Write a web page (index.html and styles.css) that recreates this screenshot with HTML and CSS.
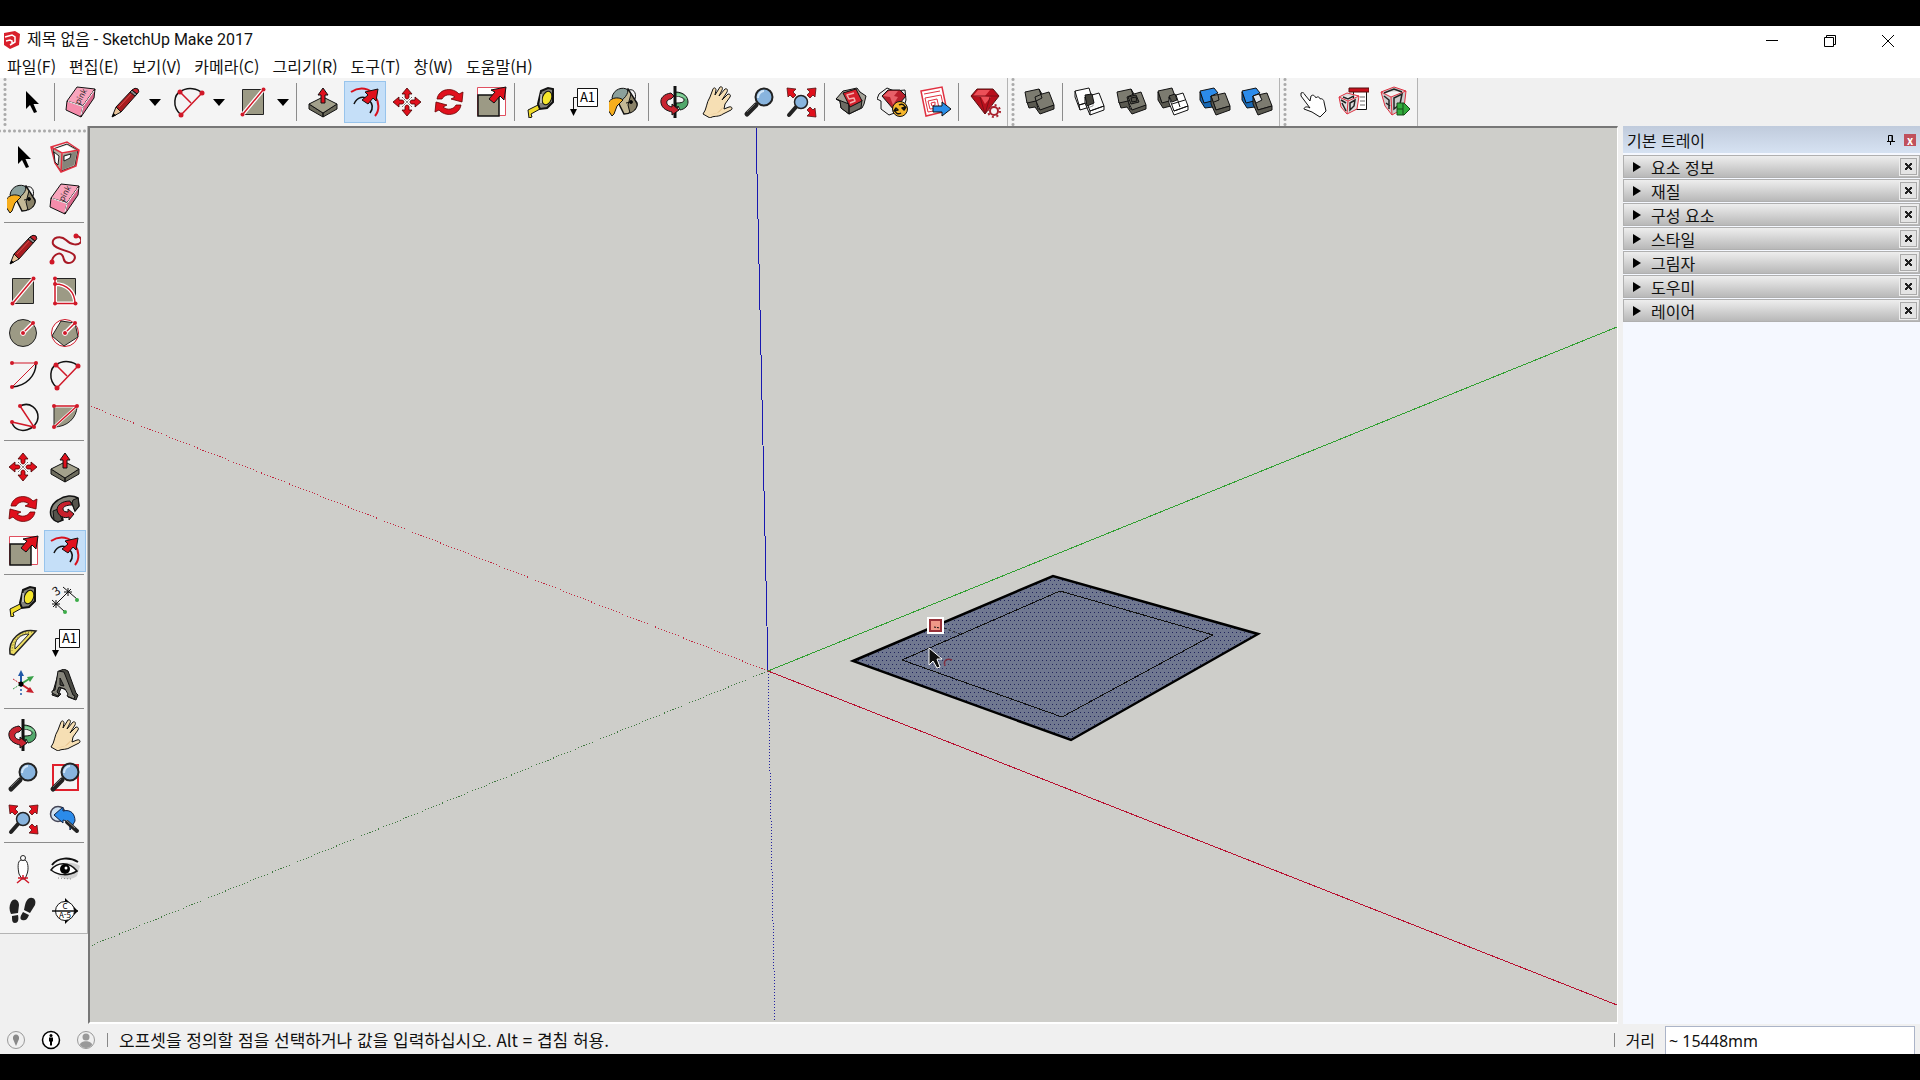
FILE: index.html
```
<!DOCTYPE html>
<html lang="ko">

<head>
    <meta charset="utf-8">
    <title>제목 없음 - SketchUp Make 2017</title>
    <meta name="viewport" content="width=device-width, initial-scale=1.0">
    <link rel="stylesheet" href="styles.css">
</head>

<body>
    <!-- icon sprite -->
    <svg class="sprite">
        <defs>
            <symbol id="i-select" viewBox="0 0 32 32">
                <path d="M11 5v18l4-4 4 8 3-1-3.5-8H24z" />
            </symbol>
            <symbol id="i-eraser" viewBox="0 0 32 32" stroke="#111" stroke-linejoin="round">
                <path fill="#f58cab" d="M2 15l16 5-2 11-15-7z" />
                <path fill="#f9a5bd" d="M12 1l18 2-12 17-16-5z" />
                <path fill="#d9688b" d="M30 3l-1 9-13 19 2-11z" />
                <path fill="none" stroke="#fff" d="M3 15.5l15 5L29 5M18 21l-2 8" />
                <text x="9" y="14" font-size="8" fill="#222" stroke="none" transform="rotate(-62 16 12)" font-family="Liberation Serif">pink</text>
            </symbol>
            <symbol id="i-pencil" viewBox="0 0 32 32">
                <path fill="#a81c20" stroke="#111" d="M7 21L23 4l5 4-16 18z" />
                <path stroke="#d8504a" d="M10 21L24 6" />
                <path fill="#e8c49a" stroke="#111" d="M7 21l5 5-9 5z" />
                <path d="M3 31l1.5-4 2.5 2.5z" />
                <path fill="#888" stroke="#111" d="M21 6l5 4 2-2-5-4z" />
                <path fill="#c8202c" stroke="#111" d="M23 4q3-3 6-1 2 3-1 5z" />
            </symbol>
            <symbol id="i-arc" viewBox="0 0 32 32" fill="none">
                <path stroke="#111" stroke-width="1.5" d="M8 29C-2 20 2 8 7 6c8-6 18-3 22 1" />
                <path stroke="#d01828" stroke-width="1.5" d="M8 29L29 7M7 6l11 11" />
                <g fill="#d01828">
                    <circle cx="7" cy="6" r="2.5" />
                    <circle cx="29" cy="7" r="2.5" />
                    <circle cx="8" cy="29" r="2.5" />
                </g>
            </symbol>
            <symbol id="i-rect" viewBox="0 0 32 32">
                <path fill="#9c9a85" stroke="#222" d="M5.5 3.5h21v25h-21z" />
                <path stroke="#fff" stroke-width="4" d="M6 28L26 4" />
                <path stroke="#d01828" stroke-width="1.5" d="M6 28L26 4" />
                <circle fill="#d01828" cx="5.5" cy="28.5" r="2" />
                <circle fill="#d01828" cx="26.5" cy="3.5" r="2" />
            </symbol>
            <symbol id="i-pushpull" viewBox="0 0 32 32" stroke="#111">
                <path fill="#6c6b5c" d="M2 18l14 9v4L2 23zM30 18l-14 9v4l14-8z" />
                <path fill="#a3a18c" d="M16 11l14 7-14 9-14-9z" />
                <path fill="#e0101c" d="M16 2l5 7h-3v8h-4V9h-3z" />
            </symbol>
            <symbol id="i-offset" viewBox="0 0 32 32" fill="none">
                <path stroke="#d8101c" stroke-width="2" d="M2 6c9-6 19-4 24 4 4 6 5 14 0 20" />
                <path stroke="#111" stroke-width="1.5" d="M5 18c3-7 10-9 15-4 4 4 4 9 1 13" />
                <path stroke="#111" fill="#e0101c" d="M29 3l-2 12-3-3-5 6-6-4 6-5-3-3z" />
            </symbol>
            <symbol id="i-move" viewBox="0 0 32 32" stroke="#400" stroke-width=".8" fill="#e0101c">
                <path d="M16 2l5 6h-3v5h-4V8h-3zM16 30l5-6h-3v-5h-4v5h-3zM2 16l6-5v3h5v4H8v3zM30 16l-6-5v3h-5v4h5v3z" />
                <path fill="none" stroke="#fff" stroke-width="2.5" d="M11 11l10 10M21 11L11 21" />
                <path fill="none" stroke="#333" stroke-dasharray="2 1" d="M11 11l10 10M21 11L11 21" />
            </symbol>
            <symbol id="i-rotate" viewBox="0 0 32 32" stroke="#600" stroke-width=".8" fill="#e0101c">
                <path d="M4 13C6 2 20 1 26 8l4-2-1 10-11-3 4-2C17 7 11 9 9 13z" />
                <path d="M28 19c-2 11-16 12-22 5l-4 2 1-10 11 3-4 2c5 4 11 2 13-2z" />
            </symbol>
            <symbol id="i-scale" viewBox="0 0 32 32">
                <path fill="#fff" stroke="#e05060" d="M2.5 1.5h28v28h-28z" />
                <path fill="#9c9a85" stroke="#111" stroke-width="1.5" d="M3 9h21v21H3z" />
                <path fill="#e0101c" stroke="#111" d="M31 1l-2 13-4-4-6 7-5-4 6-7-4-2z" />
            </symbol>
            <symbol id="i-tape" viewBox="0 0 32 32" stroke="#111">
                <path fill="#f0dc28" d="M3 24l10-5 2 4-9 5 1 3-3 1z" />
                <path fill="#83837b" stroke-width="2" d="M16 5l7-3 5 1v13l-6 6-7 1-2-5z" />
                <ellipse cx="22" cy="12" rx="4.5" ry="7" fill="#f5e62c" transform="rotate(20 22 12)" />
                <path stroke="#fff" d="M16 8v9" />
            </symbol>
            <symbol id="i-label" viewBox="0 0 32 32">
                <path fill="#fff" stroke="#111" d="M10.5 2.5h20v18h-20z" />
                <path fill="none" stroke="#111" d="M10 11.5H6.5V25" />
                <path d="M3 23h7l-3.5 7z" />
                <text x="20.5" y="16" text-anchor="middle" font-size="13" font-family="Liberation Mono">A1</text>
            </symbol>
            <symbol id="i-bucket" viewBox="0 0 32 32" stroke="#111">
                <path fill="#c4b997" stroke-width="1.5" d="M6 10L19 3l9 14c1 6-7 11-13 11z" />
                <path fill="#8a8268" d="M22 8l6 10c0 5-4 8-7 9l-2-8z" />
                <path fill="#8ba09c" d="M3 12c1-9 11-12 16-8 0 6-7 12-12 13z" />
                <path fill="none" d="M18 5c6-4 10 2 8 8M17 17l5-1" />
                <circle cx="22" cy="16" r="1.5" />
                <path fill="#f7ae1c" d="M3 13c4-2 9-1 11 1l-6 6-3 8-2 2-4-6c-1-5 0-9 4-11z" />
            </symbol>
            <symbol id="i-orbit" viewBox="0 0 32 32" stroke="#111">
                <path fill="#52a86c" d="M16 6c9 0 13 5 13 10 0 4-3 7-8 8l-2-4-2 5v-8c6 0 8-1 8-3s-4-4-9-4z" />
                <path fill="#85d09a" stroke="none" d="M17 7c7 1 10 3 11 7-3-3-6-4-11-4z" />
                <path stroke-width="3" d="M16 0v32" />
                <path fill="#c82430" d="M12 7C5 8 1 12 2 17c1 6 7 8 11 9v3l7-5-7-6v3c-4-1-6-3-5-6 1-1 2-2 4-2l3-3z" />
            </symbol>
            <symbol id="i-pan" viewBox="0 0 32 32">
                <path fill="#f6dfb4" stroke="#111" stroke-linejoin="round" d="M2 28c4-5 3-11 7-17l3-8c1-2 3-1 3 1l-1 5 5-8c2-1 3 1 2 3l-3 6 6-7c2-1 3 1 2 3l-5 8 6-6c2 0 3 1 2 3l-5 7-1 5 5-2c3-1 4 2 2 3l-8 4c-4 3-9 2-11 3l-2 1z" />
                <path fill="#e5bd85" d="M22 21l-6 6-9 2 6-1c5-1 8-4 9-7z" />
            </symbol>
            <symbol id="i-zoom" viewBox="0 0 32 32">
                <path stroke="#222" stroke-width="5" stroke-linecap="round" d="M4 28l9-9" />
                <path stroke="#666" d="M4 26l8-8" />
                <circle cx="21" cy="11" r="8.5" fill="#88b4de" stroke="#222" stroke-width="2" />
                <path fill="none" stroke="#d0e5f8" stroke-width="2" d="M15 12c0-4 3-7 6-7" />
            </symbol>
            <symbol id="i-extents" viewBox="0 0 32 32">
                <g fill="#e0101c" stroke="#511" stroke-width=".8">
                    <path d="M2 2l9 1-3 3 3 3-3 3-3-3-2 2z" />
                    <path d="M31 2l-9 1 3 3-3 3 3 3 3-3 2 2z" />
                    <path d="M31 31l-9-1 3-3-3-3 3-3 3 3 2-2z" />
                </g>
                <path stroke="#222" stroke-width="4" stroke-linecap="round" d="M4 29l7-8" />
                <circle cx="16" cy="16" r="6.5" fill="#88b4de" stroke="#222" stroke-width="1.5" />
            </symbol>
            <symbol id="i-warehouse" viewBox="0 0 32 32" stroke="#111" stroke-linejoin="round">
                <path fill="#a5a399" d="M1 13l7-8 5-1 9-2 3 4 6 4-2 8-2 4-13 6-8-6-1-7z" />
                <path fill="#6c6a62" d="M1 13l13 5v10l-8-6-1-7zM27 14l-13 4v10l12-6z" />
                <path fill="#d4202c" d="M8 7l13-4 6 12-12 6z" />
                <path fill="none" stroke="#f4b0b0" stroke-width="1.5" d="M19 7l-7 2 2 4 5-1 1 3-5 2" />
            </symbol>
            <symbol id="i-extension" viewBox="0 0 32 32" stroke="#111" stroke-linejoin="round">
                <path fill="#eee" d="M2 8l8-6 7 3 11-1 1 10-3 10-14 5-8-6V15l-4-2z" />
                <path fill="#b8202c" d="M11 4h12l6 6-12 14L5 10z" />
                <path fill="#e86068" stroke="none" d="M12 5h9l-4 5 4 1-5 8-3-8-7-1z" />
                <circle cx="23" cy="23" r="7.5" fill="#f5b62c" />
                <path fill="none" stroke-width="1.5" d="M18 24c0 3 3 5 6 3M28 22c0-3-3-5-6-3M17 25l2-3 2 2zM29 21l-2 3-2-2z" />
            </symbol>
            <symbol id="i-layout" viewBox="0 0 32 32">
                <path fill="#fff" stroke="#e03040" stroke-width="1.5" d="M2 5l21-4 5 24-21 5z" />
                <path fill="none" stroke="#e03040" d="M5 8l16-3M6 12l16-3 3 14-16 3zM9 15l9-2 2 9-9 1zM12 17l4-1v3l-3 1z" />
                <path fill="#2a8ee8" stroke="#111" d="M14 20h9v-4l9 7-9 7v-4h-9z" />
            </symbol>
            <symbol id="i-ruby" viewBox="0 0 32 32">
                <path fill="#b8101c" stroke="#511" d="M8 3h16l6 7-14 18L2 10z" />
                <path fill="#ec5058" d="M9 4h12l-5 6 6 1-6 7-4-7-8-1z" />
                <path fill="none" stroke="#7c1018" d="M2 10h28M11 11l5 17 5-17" />
                <circle cx="25" cy="25" r="4" fill="#f4f4f4" stroke="#a8202c" stroke-width="2" />
                <circle cx="25" cy="25" r="6" fill="none" stroke="#a8202c" stroke-width="2" stroke-dasharray="2 2.7" />
            </symbol>
            <symbol id="i-solid" viewBox="0 0 32 32" stroke="#111" stroke-linejoin="round">
                <path fill="#5a5950" d="M4 16l9-2 2 9 16-4v4l-14 5-5-7-6 1z" />
                <path fill="#7c7b70" d="M2 6l14-3 3 5 7-2 5 13-14 5-4-9-9 2z" />
                <path fill="none" d="M16 3l3 9-6 3M19 8l-7 3 1 4" />
            </symbol>
            <symbol id="i-intersect" viewBox="0 0 32 32" stroke="#111" fill="#fff" stroke-linejoin="round">
                <path d="M2 5l14-3 4 13-14 4zM6 19l14-4v5L7 24zM2 5v6l5 13" />
                <path fill-opacity=".6" d="M12 11l14-4 5 13-14 5zM17 25l14-5v4l-14 5zM12 11v6l5 12" />
                <path fill="#45443d" d="M12 9l7-1 2 9-7 3z" />
            </symbol>
            <symbol id="i-union" viewBox="0 0 32 32" stroke="#111" stroke-linejoin="round">
                <use href="#i-solid" width="32" height="32" />
                <path fill="#56554c" d="M13 11l8-2 3 7-8 2z" />
                <path fill="none" d="M16 12l5-1 1 4-5 1z" />
            </symbol>
            <symbol id="i-subtract" viewBox="0 0 32 32" stroke="#111" stroke-linejoin="round">
                <path fill="#5a5950" d="M5 16l8-2 1 6-8 2-5-8V6z" />
                <path fill="#7c7b70" d="M1 5l14-3 4 11-14 4z" />
                <path fill="#fff" d="M12 11l14-4 5 13-14 5zM17 25l14-5v4l-14 5-5-12v-6M19 9l4 12M15 18l13-4" />
                <path fill="#56554c" d="M12 10l6-2 2 6-5 2z" />
            </symbol>
            <symbol id="i-trim" viewBox="0 0 32 32" stroke="#111" stroke-linejoin="round">
                <path fill="#1768b4" d="M1 6l4 10 7-1 2 6-8 1-5-8z" />
                <path fill="#2b8bea" d="M1 5l14-3 4 5-7 3 1 5-8 2z" />
                <path fill="#7c7b70" d="M12 10l14-3 5 13-14 4z" />
                <path fill="#5a5950" d="M17 24l14-4v4l-14 5-5-11v-8z" />
                <path fill="none" d="M19 9l1 5-5 2" />
            </symbol>
            <symbol id="i-split" viewBox="0 0 32 32" stroke="#111" stroke-linejoin="round">
                <use href="#i-trim" width="32" height="32" />
                <path fill="#dfe4e8" d="M12 10l6-2 3 6-6 3z" />
            </symbol>
            <symbol id="i-finger" viewBox="0 0 32 32">
                <path fill="#fff" stroke="#111" stroke-linejoin="round" d="M6 7c2-1 3 0 4 2l5 6 1-5c2-2 4 0 5 2 1-2 4-1 4 1 2-1 4 1 4 3l2 9-6 6-8-5-8-3c0-2 3-3 6-1L6 10z" />
            </symbol>
            <symbol id="i-dynopt" viewBox="0 0 32 32">
                <path fill="#fff" stroke="#111" d="M16.5 3.5h13v20h-13z" />
                <path fill="#c8101c" stroke="#511" d="M12 2h20v4H12z" />
                <path stroke="#666" d="M23 11h5M23 15h5M23 19h5" />
                <path fill="#ddd" stroke="#e03040" d="M2 11l8-4 12 3-2 13-10 5-6-7zM2 11l9 4 11-5M11 15l-1 13" />
                <path fill="none" stroke="#222" stroke-width="1.5" d="M4 14l5 3M13 17l5-3-1 6-4 4zM5 17l4 8M6 11l5 2 6-3" />
            </symbol>
            <symbol id="i-dynattr" viewBox="0 0 32 32">
                <path fill="#ccc" stroke="#e03040" d="M2 6l13-5 12 4-2 17-12 7-7-9zM2 6l10 5 15-6M12 11l1 18" />
                <path fill="none" stroke="#222" stroke-width="1.5" d="M5 7l10-4 8 3M5 10l5 4v9M15 12l8-4-2 10-6 5zM7 17l4 3" />
                <path fill="#32ac3c" stroke="#164818" d="M18 17h7l6 6-6 6h-7z" />
                <path stroke="#164818" d="M18 23h6M24 17v12" />
            </symbol>
            <symbol id="i-component" viewBox="0 0 32 32">
                <path fill="#b5b3a6" stroke="#222" d="M4 8l14-5 11 6-3 16-14 5-6-8z" />
                <path fill="#fff" d="M6 8l12-4 8 5-13 4z" />
                <path fill="#85847a" d="M14 14l14-4-3 14-12 5z" />
                <path fill="none" stroke="#e03040" stroke-width="1.5" d="M2 6l16-5 12 8-3 16-15 6-6-9zM2 6l11 6 17-3M13 12l-1 19" />
                <path fill="#fff" stroke="#222" d="M5 11l5 4-1 9-3-3zM15 15l7-2-1 4-6 3z" />
            </symbol>
            <symbol id="i-freehand" viewBox="0 0 32 32">
                <path fill="none" stroke="#a81824" stroke-width="2" d="M3 29c0-6 7-11 10-7 3 3 0 7 6 8 6 0 9-6 5-9C19 17 7 17 4 11c-2-7 8-9 13-4s12 6 15 2c1-4-2-6-5-6" />
                <circle fill="#d01828" cx="3" cy="29" r="2.5" />
                <circle fill="#d01828" cx="27" cy="3" r="2.5" />
            </symbol>
            <symbol id="i-rotrect" viewBox="0 0 32 32">
                <path fill="#9c9a85" stroke="#222" d="M6 3.5h20.5v25H6z" />
                <path fill="none" stroke="#fff" stroke-width="4" d="M6 4v24.5h20C26 17 18 9 6 9" />
                <path fill="none" stroke="#d01828" stroke-width="1.5" d="M6 4v24.5h20C26 17 18 9 6 9" />
                <g fill="#d01828">
                    <circle cx="6" cy="3.5" r="2" />
                    <circle cx="6" cy="9" r="2" />
                    <circle cx="6" cy="28.5" r="2" />
                    <circle cx="26.5" cy="28.5" r="2" />
                </g>
            </symbol>
            <symbol id="i-circle" viewBox="0 0 32 32">
                <circle cx="16" cy="16" r="13.5" fill="#9c9a85" stroke="#222" />
                <path stroke="#fff" stroke-width="4" d="M16 16L26 6" />
                <path stroke="#d01828" stroke-width="1.5" d="M16 16L26 6" />
                <circle cx="16" cy="16" r="2.5" fill="#d01828" stroke="#fff" />
                <circle fill="#d01828" cx="26" cy="6" r="2" />
            </symbol>
            <symbol id="i-polygon" viewBox="0 0 32 32">
                <circle cx="16" cy="16" r="13.5" fill="#fff" stroke="#d01828" />
                <path fill="#9c9a85" stroke="#222" d="M12 4l14 2 3 14-14 9L3 19z" />
                <path stroke="#fff" stroke-width="4" d="M16 16L26 6" />
                <path stroke="#d01828" stroke-width="1.5" d="M16 16L26 6" />
                <circle cx="16" cy="16" r="2.5" fill="#d01828" stroke="#fff" />
                <circle fill="#d01828" cx="26" cy="6" r="2" />
            </symbol>
            <symbol id="i-arc2" viewBox="0 0 32 32" fill="none">
                <path stroke="#111" stroke-width="1.5" d="M29 4c0 13-10 23-24 24" />
                <path stroke="#d01828" d="M5 4h24L5 28" />
                <g fill="#d01828">
                    <circle cx="5" cy="4" r="2" />
                    <circle cx="29" cy="4" r="2" />
                    <circle cx="5" cy="28" r="2" />
                </g>
            </symbol>
            <symbol id="i-arc3" viewBox="0 0 32 32" fill="none">
                <path stroke="#111" stroke-width="1.5" d="M13 5c10-5 18 3 18 11 0 12-20 20-26 6" />
                <path stroke="#d01828" stroke-width="1.5" d="M13 5l14 21-22-5" />
                <g fill="#d01828">
                    <circle cx="13" cy="5" r="2" />
                    <circle cx="27" cy="26" r="2" />
                    <circle cx="5" cy="21" r="2" />
                </g>
            </symbol>
            <symbol id="i-pie" viewBox="0 0 32 32">
                <path fill="#9c9a85" stroke="#222" d="M5 5h23c0 12-10 21-23 21z" />
                <path stroke="#fff" stroke-width="3" d="M5 26L28 5M5 5h23" />
                <path stroke="#d01828" stroke-width="1.5" d="M5 26L28 5M5 5h23" />
                <g fill="#d01828">
                    <circle cx="5" cy="5" r="2" />
                    <circle cx="28" cy="5" r="2" />
                    <circle cx="5" cy="26" r="2" />
                </g>
            </symbol>
            <symbol id="i-follow" viewBox="0 0 32 32" stroke="#111">
                <path fill="#85847a" stroke-width="1.5" d="M5 27c-6-5-4-15 4-20 7-5 15-5 20-2l1 8-4 5-3-8c-6-1-11 2-11 8l2 9-5 2z" />
                <path fill="#55544c" d="M5 27l-1-9 5-2 4 11-4 2zM29 5l-5 2-1 3 3 8 4-5z" />
                <path fill="#c8202c" d="M21 8c-8 0-13 4-13 9 1 6 7 9 12 7v3l5-6-6-5v3c-3 0-5-1-5-3s3-4 9-4z" />
            </symbol>
            <symbol id="i-dimension" viewBox="0 0 32 32" fill="none" stroke="#111">
                <path d="M7 19L19 7M14 2l14 12M3 15l13 12M3 19h8M7 15v8M15 7h8M19 3v8M4 22l6-6M16 10l6-6" />
                <text x="4" y="10" font-size="12" fill="#111" stroke="none" font-family="Liberation Sans" transform="rotate(-35 8 6)">3</text>
                <circle cx="28" cy="15" r="2" fill="#3cac48" stroke="none" />
                <circle cx="16" cy="27" r="2" fill="#3cac48" stroke="none" />
            </symbol>
            <symbol id="i-protractor" viewBox="0 0 32 32">
                <path fill="#ecdc62" stroke="#222" stroke-width="1.5" d="M29 4C14 1 1 12 3 27l4 1z" />
                <path fill="#f4f4f4" stroke="#222" d="M22 7C13 7 7 13 8 22z" />
                <path fill="none" stroke="#665c20" stroke-dasharray="1 2" d="M25 5C13 5 5 14 5 24" />
            </symbol>
            <symbol id="i-axes" viewBox="0 0 32 32">
                <path stroke="#2058a8" stroke-width="2" d="M14 15V6" />
                <path fill="#2058a8" d="M11 7l3-6 3 6z" />
                <path stroke="#38a048" stroke-width="2" d="M14 15l8-5" />
                <path fill="#38a048" d="M20 8l7-1-4 6z" />
                <path stroke="#c8202c" stroke-width="2" d="M14 15l9 6" />
                <path fill="#c8202c" d="M23 18l4 6-8-1z" />
                <path stroke="#c8202c" stroke-dasharray="2 1" d="M6 10l8 5" />
                <path stroke="#38a048" stroke-dasharray="2 1" d="M6 20l8-5" />
                <path stroke="#2058a8" stroke-width="1.5" stroke-dasharray="2 2" d="M14 16v11" />
                <circle cx="14" cy="15" r="2.5" />
            </symbol>
            <symbol id="i-text3d" viewBox="0 0 32 32" stroke="#111" stroke-linejoin="round">
                <path fill="#4a4a43" d="M10 2l5-2 4 2 8 22 2 2-2 5-8-3 1-3-2-4-6-2-2 5 2 1-3 3-6-2z" />
                <path fill="#85847a" d="M9 2l6 1 9 23 2 1-1 3-7-3 1-2-3-5-6-2-2 5 2 2-1 2-6-3v-2l3-1zM11 9v7l4 1z" />
            </symbol>
            <symbol id="i-zoomwin" viewBox="0 0 32 32">
                <path fill="none" stroke="#e0202c" stroke-width="2" d="M4 4h25v25H4z" />
                <use href="#i-zoom" width="32" height="32" />
            </symbol>
            <symbol id="i-previous" viewBox="0 0 32 32">
                <circle cx="9" cy="11" r="7.5" fill="#cfe0ef" stroke="#445" stroke-width="1.5" />
                <path fill="#2b8bea" stroke="#124" d="M5 12l9-8v4c8-2 12 3 12 10l-5 9c0-6-2-9-7-10v3z" />
                <path stroke="#222" stroke-width="4" stroke-linecap="round" d="M18 19l10 9" />
                <path stroke="#888" d="M17 17l9 8" />
            </symbol>
            <symbol id="i-camera" viewBox="0 0 32 32">
                <path fill="#fff" stroke="#222" d="M14 7c-4 1-3 9-2 14l3 5h3l2-5c2-5 1-13-2-14z" />
                <circle cx="16" cy="5" r="2.5" fill="#fff" stroke="#222" />
                <path stroke="#d01828" stroke-width="1.5" d="M10 30l6-5 6 5M11 25h10M16 25v-3" fill="none" />
            </symbol>
            <symbol id="i-look" viewBox="0 0 32 32">
                <path fill="#d0d0d0" d="M3 16c4-6 20-9 28-3l-3 10c-5 4-14 4-19-1z" />
                <path fill="none" stroke="#111" stroke-width="2" d="M3 12C9 4 21 4 29 9" />
                <path fill="#fff" stroke="#111" stroke-width="1.5" d="M2 17c6-8 18-9 26 1-8 5-18 5-26-1z" />
                <circle cx="16" cy="16" r="5" />
                <circle cx="17" cy="15" r="1.5" fill="#fff" />
                <path stroke="#888" stroke-dasharray="1 2" d="M9 25l13 1" />
            </symbol>
            <symbol id="i-walk" viewBox="0 0 32 32" fill="#222">
                <path d="M4 7c3-5 8-2 8 3l-1 8-7 1C2 15 2 11 4 7zM5 21l6-1c1 5 0 8-3 8s-3-3-3-7z" />
                <path d="M21 4c4-3 9 0 7 6l-5 8-6-3c1-4 1-8 4-11zM16 17l6 3c-2 5-4 6-7 5s-1-5 1-8z" />
            </symbol>
            <symbol id="i-section" viewBox="0 0 32 32">
                <path d="M16 3l13 13-13 13z" />
                <circle cx="16" cy="16" r="9.5" fill="#fff" stroke="#111" />
                <path stroke="#111" stroke-width="1.5" d="M3 16h26" />
                <g font-family="Liberation Serif" font-size="8" text-anchor="middle">
                    <text x="16" y="14">C</text>
                    <text x="16" y="23">A-5</text>
                </g>
            </symbol>
        </defs>
    </svg>

    <header class="titlebar">
        <svg class="logo" viewBox="0 0 18 20">
            <path fill="#d8202c" d="M1 3l11-2 5 3-1 11-9 4-6-4z" />
            <path fill="none" stroke="#fff" stroke-width="1.5" d="M2 7l7-2 3 2v5l-5 3M3 11l4-1 2 1v2" />
        </svg>
        <h1 class="apptitle">제목 없음 - SketchUp Make 2017</h1>
        <div class="winbuttons">
            <button aria-label="최소화"><svg viewBox="0 0 12 12"><path d="M0 5.5h12" /></svg></button>
            <button aria-label="복원"><svg viewBox="0 0 12 12"><path d="M.5 2.5h9v9h-9zM2.5 2.500v-2h9v9h-2" /></svg></button>
            <button aria-label="닫기"><svg viewBox="0 0 12 12"><path d="M0 0l12 12M12 0L0 12" /></svg></button>
        </div>
    </header>

    <nav class="menubar">
        <button>파일(F)</button>
        <button>편집(E)</button>
        <button>보기(V)</button>
        <button>카메라(C)</button>
        <button>그리기(R)</button>
        <button>도구(T)</button>
        <button>창(W)</button>
        <button>도움말(H)</button>
    </nav>

    <div class="topbars">
        <div class="toolbar">
            <button class="tool" aria-label="선택"><svg><use href="#i-select" /></svg></button>
            <span class="sep"></span>
            <button class="tool" aria-label="지우개"><svg><use href="#i-eraser" /></svg></button>
            <button class="tool split" aria-label="선"><svg><use href="#i-pencil" /></svg><span class="caret"></span></button>
            <button class="tool split" aria-label="호"><svg><use href="#i-arc" /></svg><span class="caret"></span></button>
            <button class="tool split" aria-label="도형"><svg><use href="#i-rect" /></svg><span class="caret"></span></button>
            <span class="sep"></span>
            <button class="tool" aria-label="밀기/끌기"><svg><use href="#i-pushpull" /></svg></button>
            <button class="tool active" aria-label="오프셋"><svg><use href="#i-offset" /></svg></button>
            <button class="tool" aria-label="이동"><svg><use href="#i-move" /></svg></button>
            <button class="tool" aria-label="회전"><svg><use href="#i-rotate" /></svg></button>
            <button class="tool" aria-label="배율"><svg><use href="#i-scale" /></svg></button>
            <span class="sep"></span>
            <button class="tool" aria-label="줄자"><svg><use href="#i-tape" /></svg></button>
            <button class="tool" aria-label="텍스트"><svg><use href="#i-label" /></svg></button>
            <button class="tool" aria-label="페인트 통"><svg><use href="#i-bucket" /></svg></button>
            <span class="sep"></span>
            <button class="tool" aria-label="궤도"><svg><use href="#i-orbit" /></svg></button>
            <button class="tool" aria-label="이동 보기"><svg><use href="#i-pan" /></svg></button>
            <button class="tool" aria-label="확대/축소"><svg><use href="#i-zoom" /></svg></button>
            <button class="tool" aria-label="범위 확대"><svg><use href="#i-extents" /></svg></button>
            <span class="sep"></span>
            <button class="tool" aria-label="3D Warehouse"><svg><use href="#i-warehouse" /></svg></button>
            <button class="tool" aria-label="Extension Warehouse"><svg><use href="#i-extension" /></svg></button>
            <button class="tool" aria-label="LayOut"><svg><use href="#i-layout" /></svg></button>
            <span class="sep"></span>
            <button class="tool" aria-label="확장 관리자"><svg><use href="#i-ruby" /></svg></button>
        </div>
        <div class="toolbar">
            <button class="tool" aria-label="외부 셸"><svg><use href="#i-solid" /></svg></button>
            <span class="sep"></span>
            <button class="tool" aria-label="교차"><svg><use href="#i-intersect" /></svg></button>
            <button class="tool" aria-label="결합"><svg><use href="#i-union" /></svg></button>
            <button class="tool" aria-label="빼기"><svg><use href="#i-subtract" /></svg></button>
            <button class="tool" aria-label="다듬기"><svg><use href="#i-trim" /></svg></button>
            <button class="tool" aria-label="분할"><svg><use href="#i-split" /></svg></button>
        </div>
        <div class="toolbar">
            <button class="tool" aria-label="상호 작용"><svg><use href="#i-finger" /></svg></button>
            <button class="tool" aria-label="구성 요소 옵션"><svg><use href="#i-dynopt" /></svg></button>
            <button class="tool" aria-label="구성 요소 특성"><svg><use href="#i-dynattr" /></svg></button>
        </div>
    </div>

    <main class="workspace">
        <div class="sidetools">
            <div class="toolgroup">
                <button class="tool" aria-label="선택"><svg><use href="#i-select" /></svg></button>
                <button class="tool" aria-label="구성 요소 만들기"><svg><use href="#i-component" /></svg></button>
                <button class="tool" aria-label="페인트 통"><svg><use href="#i-bucket" /></svg></button>
                <button class="tool" aria-label="지우개"><svg><use href="#i-eraser" /></svg></button>
            </div>
            <div class="toolgroup">
                <button class="tool" aria-label="선"><svg><use href="#i-pencil" /></svg></button>
                <button class="tool" aria-label="자유형"><svg><use href="#i-freehand" /></svg></button>
                <button class="tool" aria-label="사각형"><svg><use href="#i-rect" /></svg></button>
                <button class="tool" aria-label="회전된 사각형"><svg><use href="#i-rotrect" /></svg></button>
                <button class="tool" aria-label="원"><svg><use href="#i-circle" /></svg></button>
                <button class="tool" aria-label="다각형"><svg><use href="#i-polygon" /></svg></button>
                <button class="tool" aria-label="호"><svg><use href="#i-arc2" /></svg></button>
                <button class="tool" aria-label="2점 호"><svg><use href="#i-arc" /></svg></button>
                <button class="tool" aria-label="3점 호"><svg><use href="#i-arc3" /></svg></button>
                <button class="tool" aria-label="파이"><svg><use href="#i-pie" /></svg></button>
            </div>
            <div class="toolgroup">
                <button class="tool" aria-label="이동"><svg><use href="#i-move" /></svg></button>
                <button class="tool" aria-label="밀기/끌기"><svg><use href="#i-pushpull" /></svg></button>
                <button class="tool" aria-label="회전"><svg><use href="#i-rotate" /></svg></button>
                <button class="tool" aria-label="따라가기"><svg><use href="#i-follow" /></svg></button>
                <button class="tool" aria-label="배율"><svg><use href="#i-scale" /></svg></button>
                <button class="tool active" aria-label="오프셋"><svg><use href="#i-offset" /></svg></button>
            </div>
            <div class="toolgroup">
                <button class="tool" aria-label="줄자"><svg><use href="#i-tape" /></svg></button>
                <button class="tool" aria-label="치수"><svg><use href="#i-dimension" /></svg></button>
                <button class="tool" aria-label="각도기"><svg><use href="#i-protractor" /></svg></button>
                <button class="tool" aria-label="텍스트"><svg><use href="#i-label" /></svg></button>
                <button class="tool" aria-label="축"><svg><use href="#i-axes" /></svg></button>
                <button class="tool" aria-label="3D 텍스트"><svg><use href="#i-text3d" /></svg></button>
            </div>
            <div class="toolgroup">
                <button class="tool" aria-label="궤도"><svg><use href="#i-orbit" /></svg></button>
                <button class="tool" aria-label="이동 보기"><svg><use href="#i-pan" /></svg></button>
                <button class="tool" aria-label="확대/축소"><svg><use href="#i-zoom" /></svg></button>
                <button class="tool" aria-label="창 확대"><svg><use href="#i-zoomwin" /></svg></button>
                <button class="tool" aria-label="범위 확대"><svg><use href="#i-extents" /></svg></button>
                <button class="tool" aria-label="이전"><svg><use href="#i-previous" /></svg></button>
            </div>
            <div class="toolgroup">
                <button class="tool" aria-label="카메라 배치"><svg><use href="#i-camera" /></svg></button>
                <button class="tool" aria-label="둘러보기"><svg><use href="#i-look" /></svg></button>
                <button class="tool" aria-label="걷기"><svg><use href="#i-walk" /></svg></button>
                <button class="tool" aria-label="단면"><svg><use href="#i-section" /></svg></button>
            </div>
        </div>

        <div class="viewport">
            <svg viewBox="90 128 1527 894" preserveAspectRatio="xMidYMid slice">
                <defs>
                    <pattern id="dots" width="4" height="8" patternUnits="userSpaceOnUse">
                        <path fill="#20245c" d="M0 0h1v1H0zM2 4h1v1H2z" />
                    </pattern>
                </defs>
                <g fill="none" shape-rendering="crispEdges">
                    <path stroke="#1818b0" d="M756 128l12 543" />
                    <path stroke="#2020a0" stroke-dasharray="1 2" d="M768 671l7 349" />
                    <path stroke="#30a030" d="M768 671l849-344" />
                    <path stroke="#407840" stroke-dasharray="1 2" d="M768 671L90 946" />
                    <path stroke="#b81030" d="M768 671l849 334" />
                    <path stroke="#c02840" stroke-dasharray="1 2" d="M768 671L90 406" />
                </g>
                <path fill="#707890" d="M853 661l200-85 205 58-187 106z" />
                <path fill="url(#dots)" stroke="#000" stroke-width="2.5" d="M853 661l200-85 205 58-187 106z" />
                <path fill="none" stroke="#111" shape-rendering="crispEdges" d="M902 660l158-69 153 44-151 82z" />
                <path stroke="#111" stroke-dasharray="2 3" d="M944 628l16 6" />
                <path fill="#fff" d="M927 617h17v17h-17z" />
                <path fill="#f09888" stroke="#983038" stroke-width="2" d="M930 620h11v11h-11z" />
                <path stroke="#111" stroke-dasharray="2 1" d="M934 627l6 1" />
                <path fill="none" stroke="#803040" stroke-width="1.5" d="M945 666c-2-6 2-8 7-6" />
                <path fill="#111" stroke="#fff" d="M929 648v17l4-4 4 7 3-1-3-8h5z" />
            </svg>
        </div>

        <aside class="tray">
            <div class="trayhead">
                <h2>기본 트레이</h2>
                <button class="pin" aria-label="고정"><svg viewBox="0 0 8 10"><path d="M1.5 6V.5h4V6M5 1v5M0 6.5h8M3.5 7v3" /></svg></button>
                <button class="trayclose" aria-label="트레이 닫기">x</button>
            </div>
            <div class="panel"><button class="paneltitle">요소 정보</button><button class="panelclose" aria-label="닫기"></button></div>
            <div class="panel"><button class="paneltitle">재질</button><button class="panelclose" aria-label="닫기"></button></div>
            <div class="panel"><button class="paneltitle">구성 요소</button><button class="panelclose" aria-label="닫기"></button></div>
            <div class="panel"><button class="paneltitle">스타일</button><button class="panelclose" aria-label="닫기"></button></div>
            <div class="panel"><button class="paneltitle">그림자</button><button class="panelclose" aria-label="닫기"></button></div>
            <div class="panel"><button class="paneltitle">도우미</button><button class="panelclose" aria-label="닫기"></button></div>
            <div class="panel"><button class="paneltitle">레이어</button><button class="panelclose" aria-label="닫기"></button></div>
        </aside>
    </main>

    <footer class="statusbar">
        <div class="statusicons">
            <button aria-label="위치"><svg viewBox="0 0 20 20"><circle cx="10" cy="10" r="8.5" fill="none" stroke="#999" /><path fill="#888" d="M10 16L7 9c-1-6 7-6 6 0z" /></svg></button>
            <button aria-label="크레딧"><svg viewBox="0 0 20 20"><circle cx="10" cy="10" r="8.5" fill="#fff" stroke="#000" stroke-width="1.5" /><circle cx="10" cy="5.5" r="1.5" /><path d="M8 7.5h4v4h-1v4H9v-4H8z" /></svg></button>
            <button aria-label="로그인"><svg viewBox="0 0 20 20"><circle cx="10" cy="10" r="8.5" fill="none" stroke="#999" /><circle cx="10" cy="7" r="3.5" fill="#999" /><path fill="#999" d="M4 15c0-5 12-5 12 0-3 4-9 4-12 0z" /></svg></button>
        </div>
        <span class="statussep"></span>
        <p class="hint">오프셋을 정의할 점을 선택하거나 값을 입력하십시오. Alt = 겹침 허용.</p>
        <span class="statussep"></span>
        <label for="measure">거리</label>
        <input type="text" id="measure" class="measure" value="~ 15448mm">
    </footer>
</body>

</html>
```
FILE: styles.css
```
* {
    box-sizing: border-box;
    font-family: "Noto Sans CJK KR", "Noto Sans", sans-serif;
}

body {
    margin: 0;
    padding: 26px 0;
    height: 100vh;
    display: flex;
    flex-direction: column;
    background-color: #000;
    font-size: 16px;
    color: #111;
    overflow: hidden;
}

button {
    border: none;
    background: none;
    padding: 0;
    margin: 0;
    font-size: 16px;
    color: inherit;
}

h1,
h2,
p {
    margin: 0;
    font-size: 16px;
    font-weight: 400;
}

.sprite {
    position: absolute;
    width: 0;
    height: 0;
}

/* title + menu */

.titlebar {
    display: flex;
    align-items: center;
    height: 28px;
    padding-left: 3px;
    background-color: #fff;
}

.logo {
    width: 18px;
    height: 20px;
    margin-right: 6px;
}

.apptitle {
    flex: 1;
    font-family: Roboto, "Noto Sans CJK KR", sans-serif;
    line-height: 28px;
}

.winbuttons {
    display: flex;
    padding-right: 3px;
}

.winbuttons button {
    width: 58px;
    height: 28px;
}

.winbuttons svg {
    width: 12px;
    height: 12px;
    fill: none;
    stroke: #000;
}

.menubar {
    display: flex;
    gap: 13px;
    height: 24px;
    padding-left: 7px;
    background-color: #fff;
}

.menubar button {
    line-height: 24px;
    white-space: nowrap;
}

/* toolbars */

.topbars {
    display: flex;
    height: 48px;
    background-color: #f0f0f0;
}

.toolbar {
    display: flex;
    align-items: center;
    padding: 0 1px 0 10px;
    border-right: 1px solid #b4b4b4;
    background: radial-gradient(circle, #aaa 1px, transparent 2px) 3px 4px / 4px 5px repeat-y #f4f4f4;
}

.tool {
    display: flex;
    align-items: center;
    justify-content: center;
    width: 42px;
    height: 42px;
}

.tool svg {
    width: 32px;
    height: 32px;
}

.tool:hover,
.tool.active {
    background-color: #c5dff8;
    box-shadow: inset 0 0 0 1px #98c4ec;
}

.split {
    width: 64px;
    gap: 8px;
    padding-left: 2px;
}

.caret {
    border: 6px solid transparent;
    border-top: 7px solid #000;
    border-bottom: none;
}

.sep {
    width: 8px;
    height: 38px;
    background: linear-gradient(#8c8c8c, #8c8c8c) 2px 0 / 1px 100% no-repeat;
}

/* work area */

.workspace {
    flex: 1;
    display: flex;
    min-height: 0;
    background-color: #f0f0f0;
}

.sidetools {
    align-self: flex-start;
    width: 88px;
    padding: 10px 2px 0;
    border-right: 1px solid #b4b4b4;
    border-bottom: 1px solid #b4b4b4;
    background: radial-gradient(circle, #aaa 1px, transparent 2px) 2px 3px / 5px 4px repeat-x #f4f4f4;
}

.toolgroup {
    display: grid;
    grid-template-columns: 42px 42px;
    padding-bottom: 2px;
}

.toolgroup + .toolgroup {
    padding-top: 6px;
    background: linear-gradient(#8c8c8c, #8c8c8c) 2px 0 / 80px 1px no-repeat;
}

.toolgroup:last-child {
    padding-bottom: 1px;
}

.viewport {
    flex: 1;
    min-width: 0;
    border: 2px solid #777;
    border-right: 1px solid #fff;
    border-bottom: 2px solid #fff;
    background-color: #cececa;
}

.viewport svg {
    display: block;
    width: 100%;
    height: 100%;
}

.tray {
    width: 302px;
    padding-left: 5px;
    background: linear-gradient(90deg, #f0f0f0 5px, #f5f8ff 5px);
}

.trayhead {
    display: flex;
    align-items: center;
    height: 27px;
    padding: 0 4px;
    margin-bottom: 2px;
    background-image: linear-gradient(#c0cbdc, #d6e2f2);
}

.trayhead h2 {
    flex: 1;
    line-height: 26px;
}

.pin {
    width: 8px;
    height: 10px;
    margin-right: 9px;
}

.pin svg {
    display: block;
    width: 8px;
    height: 10px;
    fill: none;
    stroke: #000;
}

.trayclose {
    width: 12px;
    height: 12px;
    background-color: #c0505c;
    color: #fff;
    font-size: 11px;
    font-weight: 700;
    line-height: 10px;
}

.panel {
    display: flex;
    align-items: center;
    height: 23px;
    margin-bottom: 1px;
    padding-right: 2px;
    border: 1px solid #b0b0b0;
    background-image: linear-gradient(#eee, #b8b8b8);
}

.paneltitle {
    flex: 1;
    display: flex;
    align-items: center;
    gap: 10px;
    padding-left: 9px;
    line-height: 20px;
    text-align: left;
}

.paneltitle::before {
    content: "";
    border: 5px solid transparent;
    border-left: 8px solid #000;
    border-right: none;
}

.panelclose {
    width: 17px;
    height: 17px;
    border: 1px solid #aaa;
    outline: 1px solid #eee;
    background:
        linear-gradient(45deg, transparent 42%, #222 42%, #222 58%, transparent 58%) center / 7px 7px no-repeat,
        linear-gradient(-45deg, transparent 42%, #222 42%, #222 58%, transparent 58%) center / 7px 7px no-repeat,
        #e4e4e4;
}

/* status bar */

.statusbar {
    display: flex;
    align-items: center;
    height: 30px;
    padding: 2px 5px 0 6px;
    background-color: #f0f0f0;
}

.statusicons {
    display: flex;
    gap: 15px;
    margin-right: 11px;
}

.statusicons button,
.statusicons svg {
    display: block;
    width: 20px;
    height: 20px;
}

.statussep {
    width: 1px;
    height: 14px;
    margin-right: 11px;
    background-color: #888;
}

.hint {
    flex: 1;
    font-size: 17px;
    line-height: 24px;
    white-space: nowrap;
}

.measure {
    width: 250px;
    height: 28px;
    margin-left: 10px;
    padding: 0 3px;
    border: 1px solid #abb4c8;
    border-bottom: none;
    background-color: #fff;
    color: #111;
    font-family: "Noto Sans", sans-serif;
    font-size: 16px;
}
```
